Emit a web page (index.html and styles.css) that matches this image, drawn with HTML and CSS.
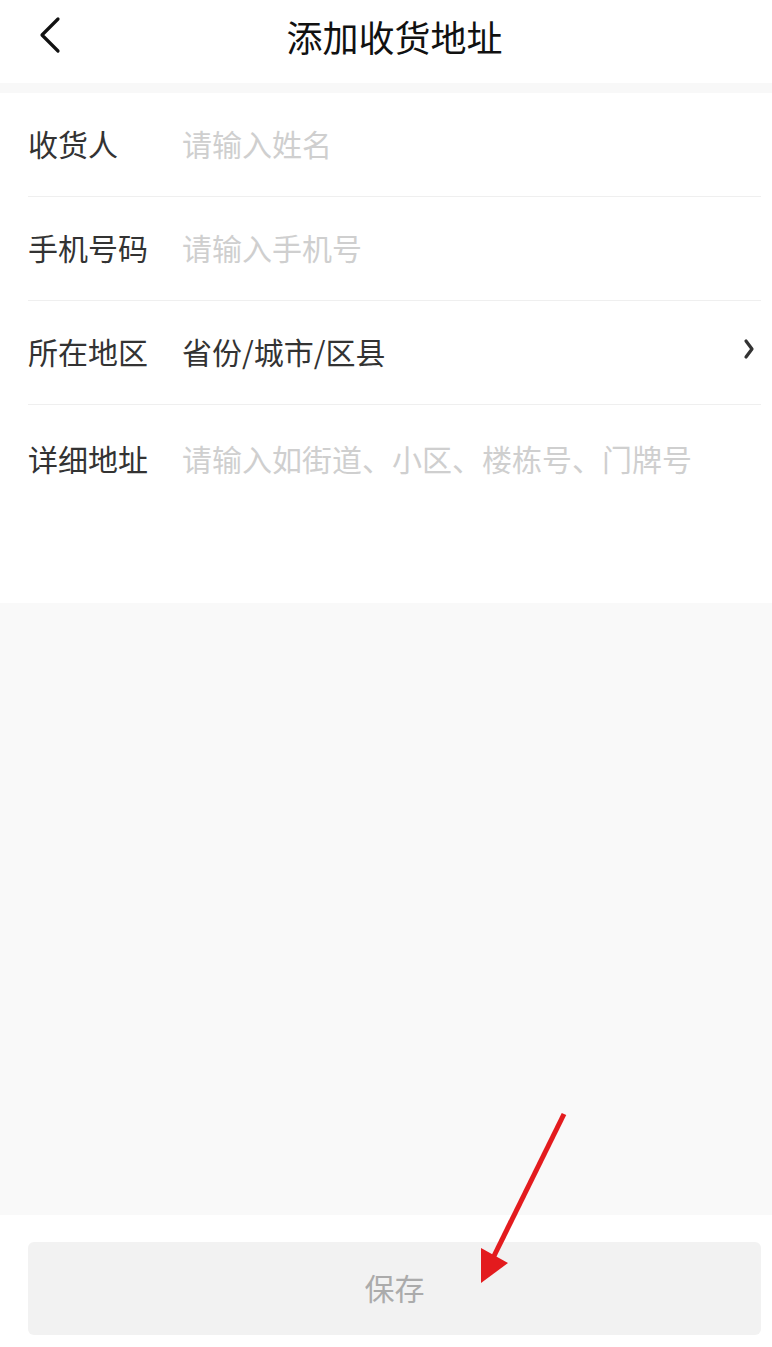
FILE: index.html
```html
<!DOCTYPE html>
<html lang="zh-CN">
<head>
<meta charset="utf-8">
<title>添加收货地址</title>
<link rel="stylesheet" href="styles.css">
</head>
<body>
<div class="page">
  <header class="topbar">
    <span class="back">
      <svg width="24" height="40" viewBox="0 0 24 40"><polyline points="20,4 4,20 20,36" fill="none" stroke="#111" stroke-width="3.2" stroke-linecap="round" stroke-linejoin="round"/></svg>
    </span>
    <h1 class="title">添加收货地址</h1>
  </header>
  <div class="strip"></div>
  <section class="form">
    <div class="row">
      <span class="label">收货人</span>
      <span class="field placeholder">请输入姓名</span>
    </div>
    <div class="row">
      <span class="label">手机号码</span>
      <span class="field placeholder">请输入手机号</span>
    </div>
    <div class="row">
      <span class="label">所在地区</span>
      <span class="field value">省份/城市/区县</span>
      <span class="chev">
        <svg width="12" height="22" viewBox="0 0 12 22"><polyline points="3,3 9,11 3,19" fill="none" stroke="#333" stroke-width="3.2" stroke-linecap="round" stroke-linejoin="round"/></svg>
      </span>
    </div>
    <div class="row row-area">
      <span class="label">详细地址</span>
      <span class="field placeholder">请输入如街道、小区、楼栋号、门牌号</span>
    </div>
  </section>
  <div class="filler"></div>
  <footer class="footer">
    <button class="save">保存</button>
  </footer>
  <svg class="arrow" width="772" height="1347" viewBox="0 0 772 1347">
    <line x1="564" y1="1114" x2="493" y2="1258" stroke="#e31b1e" stroke-width="5"/>
    <polygon points="481,1248 508,1263 481,1283" fill="#e31b1e"/>
  </svg>
</div>
</body>
</html>
```

FILE: styles.css
```css
* { box-sizing: border-box; }
html, body { margin: 0; padding: 0; background: #fff; }
body {
  font-family: "Noto Sans CJK SC", "Noto Sans", "Liberation Sans", sans-serif;
}
.page {
  position: relative;
  width: 772px;
  height: 1347px;
  display: flex;
  flex-direction: column;
  overflow: hidden;
}
.topbar {
  height: 83px;
  display: flex;
  align-items: center;
  justify-content: center;
  position: relative;
  background: #fff;
}
.back {
  position: absolute;
  left: 38px;
  top: 15px;
  display: flex;
}
.title {
  margin: -11px 0 0 17px;
  font-size: 36px;
  font-weight: 400;
  color: #111;
  line-height: 1;
}
.strip {
  height: 10px;
  background: #f8f8f8;
}
.form {
  background: #fff;
  padding-left: 28px;
  height: 510px;
}
.row {
  height: 104px;
  display: flex;
  align-items: center;
  margin-right: 11px;
  border-bottom: 1px solid #efefef;
  font-size: 30px;
  line-height: 42px;
  padding-bottom: 4px;
}
.row-area {
  height: 198px;
  border-bottom: none;
  align-items: flex-start;
  padding: 32px 0 0;
}
.label {
  width: 154px;
  flex: none;
  color: #333;
}
.field { flex: 1; }
.placeholder { color: #cfcfcf; }
.value { color: #333; }
.chev {
  display: flex;
  margin-right: 6px;
  margin-top: -4px;
}
.filler {
  flex: 1;
  background: #f9f9f9;
}
.footer {
  height: 132px;
  background: #fff;
  padding: 27px 11px 12px 28px;
}
.save {
  width: 100%;
  height: 93px;
  border: none;
  border-radius: 6px;
  background: #f2f2f2;
  color: #ababab;
  font-family: inherit;
  font-size: 30px;
  padding: 0 0 4px;
}
.arrow {
  position: absolute;
  left: 0;
  top: 0;
  pointer-events: none;
}
```
